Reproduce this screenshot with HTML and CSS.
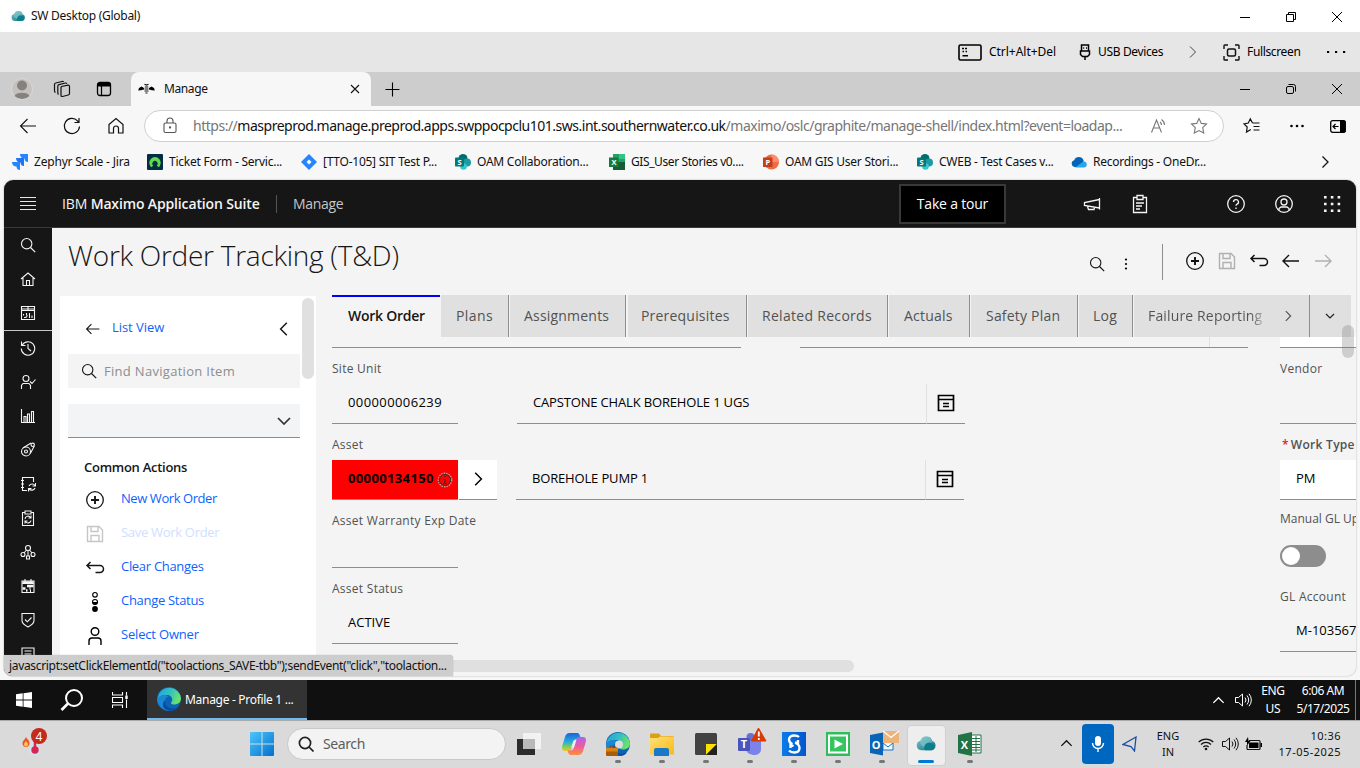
FILE: index.html
```
<!DOCTYPE html>
<html lang="en">
<head>
<meta charset="utf-8">
<title>SW Desktop (Global)</title>
<link rel="stylesheet" href="styles.css">
</head>
<body>
<svg class="defs" width="0" height="0">
  <defs>
    <linearGradient id="teal" x1="0" y1="0" x2="1" y2="1"><stop offset="0" stop-color="#7cc9cc"/><stop offset="1" stop-color="#0c6f80"/></linearGradient>
    <linearGradient id="edgeA" x1="0" y1="0" x2="1" y2="0.3"><stop offset="0" stop-color="#1f9fe0"/><stop offset=".6" stop-color="#35c1c0"/><stop offset="1" stop-color="#6be06a"/></linearGradient>
    <linearGradient id="winblue" x1="0" y1="0" x2="1" y2="1"><stop offset="0" stop-color="#4cc6fb"/><stop offset="1" stop-color="#0070d0"/></linearGradient>
    <linearGradient id="copA" x1="0" y1="0" x2="0" y2="1"><stop offset="0" stop-color="#1b60e0"/><stop offset=".5" stop-color="#25b0d8"/><stop offset=".8" stop-color="#8fd14a"/><stop offset="1" stop-color="#f6c324"/></linearGradient>
    <linearGradient id="copB" x1="0" y1="0" x2="0" y2="1"><stop offset="0" stop-color="#a965ee"/><stop offset=".5" stop-color="#ee5aa0"/><stop offset="1" stop-color="#fb8f3c"/></linearGradient>
    <linearGradient id="fold" x1="0" y1="0" x2="1" y2="1"><stop offset="0" stop-color="#ffe07a"/><stop offset="1" stop-color="#fdb813"/></linearGradient>
    <linearGradient id="snag" x1="0" y1="0" x2="1" y2="0"><stop offset="0" stop-color="#0a7be8"/><stop offset="1" stop-color="#0057d0"/></linearGradient>
  </defs>
  <symbol id="cloud" viewBox="0 0 20 16"><path d="M5 14.500a4.600 4.600 0 0 1-.6-9.100A5.800 5.800 0 0 1 15.500 5.500a4.700 4.700 0 0 1-.5 9z" fill="url(#teal)"/><circle cx="9.500" cy="6.500" r="5.500" fill="#8ccfd2" opacity=".55"/><path d="M8.500 14.500a5 5 0 0 1 6.800-6.800 3.600 3.600 0 0 1-.3 6.800z" fill="#0d7d8c"/></symbol>
  <symbol id="min" viewBox="0 0 12 12"><path d="M1 6.500h10" stroke="currentColor" fill="none"/></symbol>
  <symbol id="restore" viewBox="0 0 12 12"><path d="M1.500 3.500h7v7h-7zM3.500 3.500v-2h7v7h-2" stroke="currentColor" fill="none"/></symbol>
  <symbol id="close" viewBox="0 0 12 12"><path d="M1 1l10 10M11 1L1 11" stroke="currentColor" fill="none"/></symbol>
  <symbol id="chev" viewBox="0 0 16 16"><path d="M5.500 2.500L11 8l-5.500 5.500" stroke="currentColor" fill="none" stroke-width="1.300"/></symbol>
  <symbol id="chevup" viewBox="0 0 16 16"><path d="M2.500 10.500L8 5l5.500 5.500" stroke="currentColor" fill="none" stroke-width="1.400"/></symbol>
  <symbol id="mag" viewBox="0 0 16 16"><circle cx="6.700" cy="6.700" r="5.200" stroke="currentColor" fill="none" stroke-width="1.100"/><path d="M10.500 10.500l4.700 4.700" stroke="currentColor" stroke-width="1.200"/></symbol>
  <symbol id="plus" viewBox="0 0 20 20"><circle cx="10" cy="10" r="8.300" stroke="currentColor" fill="none" stroke-width="1.300"/><path d="M10 6v8M6 10h8" stroke="currentColor" stroke-width="1.900"/></symbol>
  <symbol id="save" viewBox="0 0 20 20"><path d="M2.500 2.500h11.500l3.500 3.500v11.500h-15zM6 2.500v5h7v-5M6 17.500v-6h8v6" stroke="currentColor" fill="none" stroke-width="1.400"/></symbol>
  <symbol id="undo" viewBox="0 0 20 20"><path d="M5.500 4L2 7.500 5.500 11M2 7.500h13a3.500 3.500 0 0 1 0 7H10.500" stroke="currentColor" fill="none" stroke-width="1.500"/></symbol>
  <symbol id="left" viewBox="0 0 20 20"><path d="M8 4L2 10l6 6M2 10h16" stroke="currentColor" fill="none" stroke-width="1.400"/></symbol>
  <symbol id="detail" viewBox="0 0 20 20"><path d="M2.500 2.500h15v15h-15zM2.500 6.500h15" stroke="#000" fill="none" stroke-width="1.700"/><path d="M7 10.500h6M7 13.500h6" stroke="#000" stroke-width="1.300"/></symbol>
  <symbol id="sp" viewBox="0 0 16 16"><circle cx="8" cy="4.500" r="4.500" fill="#036c70"/><circle cx="12" cy="8.500" r="4" fill="#1a9ba1"/><circle cx="8.500" cy="12.500" r="3.300" fill="#37c6d0"/><rect y="3.500" width="9" height="9" rx=".8" fill="#03787c"/><text x="4.500" y="10.800" class="badge-letter">S</text></symbol>
  <symbol id="speaker" viewBox="0 0 18 16"><path d="M1.500 5.500h3l4-3.500v12l-4-3.500h-3zM11 5.500a4 4 0 0 1 0 5M13 3.500a7 7 0 0 1 0 9M15 1.800a9.500 9.500 0 0 1 0 12.400" stroke="currentColor" fill="none"/></symbol>
  <symbol id="edge" viewBox="0 0 24 24"><circle cx="12" cy="12" r="12" fill="#0b63b4"/><path d="M1 9.500A11.700 11.700 0 0 1 24 11.500c0 4.500-4 6-7.500 6-2.500 0-3-1.500-2-2.500 2.200-3.200-.5-7-4.500-7C5.500 8 2 9 0 13.500z" fill="url(#edgeA)"/><path d="M0 13C2 8 8 6.500 11.500 9.500c-4 1.200-5 6-2.500 9.500s6.500 4.500 10 3C11 27 1 21.500 0 13z" fill="#1a87d7"/><path d="M8 13.500c-.5 7 7 10 13 7-3 5-11 3.500-13.500 1C5 18.500 6 15 8 13.500z" fill="#0a4a9e"/></symbol>
</svg>

<header class="titlebar">
  <svg class="cloud-sm"><use href="#cloud"/></svg>
  <span class="ui t-title">SW Desktop (Global)</span>
  <div class="winbtns">
    <span><svg width="12" height="12"><use href="#min"/></svg></span><span><svg width="12" height="12"><use href="#restore"/></svg></span><span><svg width="12" height="12"><use href="#close"/></svg></span>
  </div>
</header>

<div class="toolbar ui">
  <svg width="24" height="17" viewBox="0 0 24 17"><rect x="1" y="1" width="22" height="15" rx="1.500" fill="none" stroke="#000" stroke-width="1.600"/><path d="M4 4.500h2M7 4.500h2M4.500 7.500h1.500M7.500 7.500h1.500M4.500 11.800h5.500" stroke="#000" stroke-width="1.500"/></svg>
  <span class="t-cad">Ctrl+Alt+Del</span>
  <svg width="12" height="17" viewBox="0 0 12 17"><path d="M2.500 7V1h7v6M1.500 7h9v3.500L8.500 12.500h-5L1.500 10.500zM6 13v3" fill="none" stroke="#000" stroke-width="1.500"/><path d="M4.200 4h1M7 4h1" stroke="#000" stroke-width="1.400"/></svg>
  <span class="t-usb">USB Devices</span>
  <svg width="16" height="16" viewBox="0 0 16 16"><path d="M5 2.500L10.500 8 5 13.500" fill="none" stroke="#444"/></svg>
  <svg width="17" height="17" viewBox="0 0 17 17"><path d="M1 5V1.800q0-.8.8-.8H5M12 1h3.200q.8 0 .8.800V5M16 12v3.200q0 .8-.8.800H12M5 16H1.800q-.8 0-.8-.8V12" fill="none" stroke="#111" stroke-width="1.400"/><rect x="4.500" y="5" width="8" height="7" rx="1.500" fill="none" stroke="#111" stroke-width="1.500"/></svg>
  <span class="t-full">Fullscreen</span>
  <svg width="20" height="4" viewBox="0 0 20 4"><path d="M0 2h2.200M8 2h2.200M16 2h2.200" stroke="#000" stroke-width="2.200"/></svg>
</div>

<div class="tabstrip ui">
  <svg class="avatar" width="22" height="22" viewBox="0 0 22 22"><circle cx="11" cy="11" r="10.500" fill="#c4c1be" stroke="#d9d9d9"/><circle cx="11" cy="7.500" r="5" fill="#85817e"/><path d="M3.500 18a8 5 0 0 1 15 0 11 11 0 0 1-15 0z" fill="#85817e"/></svg>
  <svg width="18" height="18" viewBox="0 0 18 18" fill="none" stroke="#111" stroke-width="1.200"><path d="M8.500 6.500l6.500-1.300q1.500-.2 1.500 1.300v7q0 1.200-1.200 1.500L9.500 16.500Q8 16.700 8 15.200V7.500z"/><path d="M5.500 14.500Q4.800 14 4.800 13V6Q4.800 5 6 4.600l6.500-1.600q1-.1 1.300.7M2.500 12.500Q1.500 12 1.500 11V4.500Q1.500 3.300 2.700 3L9 1.500q1.200-.2 1.600.5"/></svg>
  <svg width="16" height="16" viewBox="0 0 16 16"><rect x="1.500" y="1.500" width="13" height="13" rx="2.500" fill="none" stroke="#000" stroke-width="1.300"/><path d="M1.500 2h13v3.500h-13z"/><path d="M5.500 5v9" stroke="#000" stroke-width="1.200"/></svg>
  <div class="tab">
    <svg width="17" height="12" viewBox="0 0 17 12"><path d="M6 5L3.500 3.500 1 5 .2 7.500 3 7.200l3-.7zM11 5l2.500-1.500L16 5l.8 2.500L14 7.200l-3-.7z"/><path d="M6.500 1.200L8.500 2l2-.8M6.800 4h3.500M6.500 6h4M6.500 8h4M7.500 10h2" stroke="#111" stroke-width="1.200" fill="none"/></svg>
    <span class="t-tab">Manage</span>
    <svg class="tab-x" width="10" height="10" viewBox="1 1 10 10"><path d="M2 2l8 8M10 2l-8 8" stroke="#111" stroke-width="1.100"/></svg>
  </div>
  <svg class="newtab" width="16" height="16" viewBox="0 0 16 16"><path d="M8.500 1.500v14M1.500 8.500h14" stroke="#000" stroke-width="1.100"/></svg>
  <div class="winbtns">
    <span><svg width="12" height="12"><use href="#min"/></svg></span><span><svg width="12" height="12" viewBox="0 0 12 12" fill="none" stroke="#000"><rect x="1.500" y="3.500" width="7" height="7" rx="1.500"/><path d="M3.500 1.500h5a2 2 0 0 1 2 2v5"/></svg></span><span><svg width="12" height="12"><use href="#close"/></svg></span>
  </div>
</div>

<div class="address ui">
  <svg width="20" height="20" viewBox="0 0 20 20" fill="none" stroke="#111" stroke-width="1.100"><path d="M9.500 3L2.500 10l7 7M2.500 10H18"/></svg>
  <svg width="20" height="20" viewBox="0 0 20 20" fill="none" stroke="#111" stroke-width="1.200"><path d="M17.500 10.500A7.600 7.600 0 1 1 15.500 4.800L17 6.500M17 2v4.500h-4.500"/></svg>
  <svg width="20" height="20" viewBox="0 0 20 20" fill="none" stroke="#111" stroke-width="1.200"><path d="M3 8.500L10 2.500l7 6v8.500h-4.500v-4.500a2.500 2.500 0 0 0-5 0V17H3z"/></svg>
  <div class="pill">
    <svg width="16" height="18" viewBox="0 0 16 18" fill="none" stroke="#555" stroke-width="1.100"><rect x="2" y="6" width="12" height="9.500" rx="1.500"/><path d="M5 6V4a3 3 0 0 1 6 0v2"/><circle cx="8" cy="10.500" r=".6" fill="#555"/></svg>
    <span class="url">https://<b>maspreprod.manage.preprod.apps.swppocpclu101.sws.int.southernwater.co.uk</b>/maximo/oslc/graphite/manage-shell/index.html?event=loadap...</span>
    <svg width="18" height="18" viewBox="0 0 18 18" fill="none" stroke="#777" stroke-width="1.100"><path d="M1.500 15.500L6.500 3l5 12.500M3.500 11h6M10 5a4 4 0 0 1 1.500 3M11.500 2.500a7 7 0 0 1 3 5.500"/></svg>
    <svg width="18" height="18" viewBox="0 0 18 18" fill="none" stroke="#777" stroke-width="1.100"><path d="M9 1.500l2.300 4.900 5.200.6-3.800 3.700 1 5.300L9 13.500 4.300 16l1-5.300L1.500 7l5.200-.6z"/></svg>
  </div>
  <svg width="18" height="18" viewBox="0 0 18 18" fill="none" stroke="#111" stroke-width="1.200"><path d="M9.500 6L7.300 1.800 5.300 6 1 6.800 4.200 10l-.7 5 4.300-2.500M9.500 6H16.500M10.500 9.500h6M10.500 13h6"/></svg>
  <svg width="16" height="4" viewBox="0 0 16 4"><circle cx="2.500" cy="2" r="1.300"/><circle cx="8" cy="2" r="1.300"/><circle cx="13.500" cy="2" r="1.300"/></svg>
  <svg width="16" height="13" viewBox="0 0 16 13"><rect x=".7" y=".7" width="14.600" height="11.600" rx="2" fill="none" stroke="#000" stroke-width="1.300"/><path d="M10 .5h4.500a1 1 0 0 1 1 1v10a1 1 0 0 1-1 1H10z"/><path d="M3 6.500h5.500M5.500 4L3 6.500 5.500 9" fill="none" stroke="#000" stroke-width="1.200"/></svg>
</div>

<nav class="bookmarks ui">
  <a class="bm first"><svg width="16" height="16" viewBox="0 0 16 16"><path d="M8 0h8v8c-2 0-3.500-1-3.500-3.500C10 4.500 8 3 8 0z" fill="#2684ff"/><path d="M4 4h8v8c-2 0-3.500-1-3.500-3.500C6 8.500 4 7 4 4z" fill="#1f74f0"/><path d="M0 8h8v8c-2 0-3.500-1-3.500-3.500C2 12.500 0 11 0 8z" fill="#2684ff"/></svg><span>Zephyr Scale - Jira</span></a>
  <a class="bm b2"><svg width="16" height="16" viewBox="0 0 16 16"><rect width="16" height="16" rx="1" fill="#032d42"/><path d="M4.500 13.300a5.700 5.700 0 1 1 7 0L9.800 11.500a2.600 2.600 0 1 0-3.600 0z" fill="#62d84e"/></svg><span>Ticket Form - Servic...</span></a>
  <a class="bm b3"><svg width="16" height="16" viewBox="0 0 16 16"><path d="M8 0l8 8-8 8-8-8z" fill="#2684ff"/><path d="M8 5.500L10.500 8 8 10.500 5.500 8z" fill="#fff"/></svg><span>[TTO-105] SIT Test P...</span></a>
  <a class="bm b4"><svg width="16" height="16"><use href="#sp"/></svg><span>OAM Collaboration...</span></a>
  <a class="bm b5"><svg width="16" height="16" viewBox="0 0 16 16"><rect x="4" width="12" height="16" fill="#21a366"/><path d="M4 8h12v8H4z" fill="#185c37"/><path d="M10 0h6v5h-6z" fill="#33c481"/><rect y="3.500" width="9.500" height="9.500" fill="#107c41"/><text x="4.700" y="11.300" class="badge-letter">X</text></svg><span>GIS_User Stories v0....</span></a>
  <a class="bm b6"><svg width="16" height="16" viewBox="0 0 16 16"><circle cx="8.500" cy="8" r="7.500" fill="#ed6c47"/><path d="M8.500.5A7.500 7.500 0 0 1 16 8H8.500z" fill="#ff8f6b"/><rect y="3.500" width="9.500" height="9.500" fill="#c43e1c"/><text x="4.700" y="11.300" class="badge-letter">P</text></svg><span>OAM GIS User Stori...</span></a>
  <a class="bm b7"><svg width="16" height="16"><use href="#sp"/></svg><span>CWEB - Test Cases v...</span></a>
  <a class="bm b8"><svg width="16" height="16" viewBox="0 0 16 16"><path d="M3.500 13a3.500 3.500 0 0 1-.3-6.800 5 5 0 0 1 9.300 0L13 13z" fill="#0364b8"/><path d="M4 13.500l8.500-6a3 3 0 0 1 .5 6z" fill="#28a8ea"/></svg><span>Recordings - OneDr...</span></a>
  <svg class="bm-more" width="16" height="16"><use href="#chev"/></svg>
</nav>

<div class="frame">
<div class="app">
  <header class="apphead">
    <svg class="menu" width="16" height="13" viewBox="0 0 16 13"><path d="M0 .5h16M0 4.500h16M0 8.500h16M0 12.500h16" stroke="#e8e8e8" stroke-width="1.200"/></svg>
    <span class="brand">IBM <b>Maximo Application Suite</b></span>
    <span class="brand-sub">Manage</span>
    <button class="tour">Take a tour</button>
    <div class="headicons">
      <svg width="18" height="18" viewBox="0 0 18 18" fill="none" stroke="#f4f4f4" stroke-width="1.300"><path d="M16.500 3v11.500M16.500 4.500L1.500 7.500v3L16.500 13M4.500 11.500l1 3h5.500l.5-2"/></svg>
      <svg width="20" height="20" viewBox="0 0 20 20" fill="none" stroke="#f4f4f4" stroke-width="1.300"><path d="M7 3.500H3.500v15h13v-15H13M7 1.500h6v4H7zM6 9h8M6 12h6M6 15h4"/></svg>
      <svg class="gap" width="20" height="20" viewBox="0 0 20 20" fill="none" stroke="#f4f4f4" stroke-width="1.300"><circle cx="10" cy="10" r="8.300"/><path d="M7.500 8a2.500 2.300 0 1 1 3.500 2.100c-.8.400-1 .8-1 1.600M10 13.500v1.400"/></svg>
      <svg width="20" height="20" viewBox="0 0 20 20" fill="none" stroke="#f4f4f4" stroke-width="1.300"><circle cx="10" cy="10" r="8.300"/><circle cx="10" cy="8" r="3"/><path d="M5 16.500v-2l2-1.500h6l2 1.500v2"/></svg>
      <svg width="20" height="20" viewBox="0 0 20 20" stroke="#f4f4f4" stroke-width="2.600" stroke-dasharray="2.600 4.200"><path d="M2 3.300h16.200M2 10h16.200M2 16.700h16.200"/></svg>
    </div>
  </header>
  <div class="appbody">
    <aside class="rail">
      <svg viewBox="0 0 16 16"><use href="#mag"/></svg>
      <svg viewBox="0 0 16 16"><path d="M1 8l7-6 7 6M3 7v7.500h10V7M6.500 14.500V9.500h3v5"/></svg>
      <svg viewBox="0 0 16 16"><path d="M1.500 1.500h13v13h-13zM1.500 5.500h13M1.500 4h13M8 1.500v4M4 12.500h1a1.800 1.800 0 0 0 1.500-3V8M3.500 9v1.500M9.500 13v-5M12 13v-2.500"/></svg>
      <hr>
      <svg viewBox="0 0 16 16"><path d="M1.500 1.500v4h4M2 5.500A6.700 6.700 0 1 1 1.300 8.500M8 4v4.500l3 2.500"/></svg>
      <svg viewBox="0 0 16 16"><circle cx="6" cy="4.500" r="3"/><path d="M1.500 15v-3.500l1.500-2h6l1.500 2V15M10 7.500l2 2 3.500-4"/></svg>
      <svg viewBox="0 0 16 16"><path d="M1.500 1v13.500H15M4 14.500V8.500h2v6M7.500 14.500V6h2v8.500M11.500 14.500V3.500h2v11"/></svg>
      <svg viewBox="0 0 16 16"><circle cx="6" cy="9.500" r="4.500"/><circle cx="6" cy="9.500" r="1.500"/><path d="M3 6l8-5M10.300 11.500l4-7.500"/><circle cx="12.700" cy="2.800" r="1.700"/></svg>
      <svg viewBox="0 0 16 16"><path d="M13.500 6V1.500h-11v13H7M1 4.500h3M1 8h3M1 11.500h3M9 10a3.500 3.500 0 0 1 6-.5M15.500 7v3h-3M15 12a3.500 3.500 0 0 1-6 .8M8.500 15.500v-3h3"/></svg>
      <svg viewBox="0 0 16 16"><path d="M5 2.500H2.500v13h11v-13H11M5 1h6v3H5zM5 9a3 3 0 0 1 5.500-1.500M11 5.500v2.500H8.500M11 10.500a3 3 0 0 1-5.500 1M5 13.500v-2.500h2.500"/></svg>
      <svg viewBox="0 0 16 16"><circle cx="8" cy="4" r="2.500"/><circle cx="3" cy="10.500" r="2"/><circle cx="13" cy="10.500" r="2"/><path d="M6.500 12h3v3h-3zM8 6.500V12M6.500 6L4 9M9.500 6L12 9"/></svg>
      <svg viewBox="0 0 16 16"><path d="M2 3h12v11.500H2zM2 5.500h12M5 1v3M11 1v3"/><path d="M2.500 4.500h11M7 8h6.500M2.500 10.500h3M9.500 10.500h1M6 12.500h1.500M10 13h1" stroke-width="2.400"/></svg>
      <svg viewBox="0 0 16 16"><path d="M2 1.500h12v7c0 3.500-3 5-6 6.500-3-1.500-6-3-6-6.500zM5 7.500l2.300 2.300L11.500 5.500"/></svg>
      <svg viewBox="0 0 16 16"><path d="M2 15V2h12v13M4.500 5h7M4.500 8h7M4.500 11h5"/></svg>
    </aside>
    <main class="main">
      <div class="pagehead">
        <h1>Work Order Tracking (T&amp;D)</h1>
        <div class="quick"><svg width="16" height="16"><use href="#mag"/></svg><svg width="16" height="16" viewBox="0 0 16 16"><circle cx="8" cy="3.500" r="1.100"/><circle cx="8" cy="8" r="1.100"/><circle cx="8" cy="12.500" r="1.100"/></svg></div>
        <div class="tools">
          <svg><use href="#plus"/></svg><svg class="off"><use href="#save"/></svg><svg><use href="#undo"/></svg><svg><use href="#left"/></svg><svg class="off flip"><use href="#left"/></svg>
        </div>
      </div>
      <div class="columns">
        <section class="panel">
          <div class="listview"><svg width="16" height="16"><use href="#left"/></svg><a class="t-list">List View</a><svg class="flip" width="18" height="18" viewBox="0 0 16 16"><use href="#chev" width="16" height="16"/></svg></div>
          <div class="find"><svg width="16" height="16"><use href="#mag"/></svg><span class="t-find">Find Navigation Item</span></div>
          <div class="select"><svg width="14" height="8" viewBox="0 0 14 8"><path d="M1 1l6 6 6-6" stroke="#333" fill="none" stroke-width="1.700"/></svg></div>
          <h2 class="t-common">Common Actions</h2>
          <ul>
            <li><svg><use href="#plus"/></svg><a class="t-a1">New Work Order</a></li>
            <li class="dim"><svg><use href="#save"/></svg><a class="t-a2">Save Work Order</a></li>
            <li><svg><use href="#undo"/></svg><a class="t-a3">Clear Changes</a></li>
            <li><svg viewBox="0 0 20 20"><circle cx="10" cy="2.800" r="2.300" fill="none" stroke="#000" stroke-width="1.100"/><circle cx="10" cy="10" r="2.500" fill="none" stroke="#000" stroke-width="1.100"/><path d="M7.500 10h5a2.500 2.500 0 0 1-5 0z"/><circle cx="10" cy="17" r="2.900"/></svg><a class="t-a4">Change Status</a></li>
            <li><svg viewBox="0 0 20 20" fill="none" stroke="#000" stroke-width="1.400"><circle cx="10" cy="5.500" r="3.800"/><path d="M4 19v-4a3 3 0 0 1 3-3h6a3 3 0 0 1 3 3v4"/></svg><a class="t-a5">Select Owner</a></li>
          </ul>
          <i class="vbar"></i>
        </section>
        <section class="work">
          <div class="tabs">
            <a class="on">Work Order</a><a class="w2">Plans</a><a class="w3">Assignments</a><a class="w4">Prerequisites</a><a class="w5">Related Records</a><a class="w6">Actuals</a><a class="w7">Safety Plan</a><a class="w8">Log</a><a class="w9"><span>Failure Reporting</span><svg width="14" height="14"><use href="#chev"/></svg></a><a class="w10"><svg width="12" height="12" viewBox="0 0 12 12"><path d="M2 4l4 4 4-4" stroke="#222" stroke-width="1.200" fill="none"/></svg></a>
          </div>
          <div class="form">
            <div class="left">
              <div class="stub"><i class="s1"></i><i class="s2"></i></div>
              <label>Site Unit</label>
              <div class="pair"><span class="val narrow t-num">000000006239</span><span class="val wide indent">CAPSTONE CHALK BOREHOLE 1 UGS</span><span class="val det"><svg><use href="#detail"/></svg></span></div>
              <label>Asset</label>
              <div class="pair"><span class="val narrow red">00000134150<svg width="16" height="16" viewBox="0 0 16 16" fill="none" stroke="#333"><circle cx="8" cy="8" r="6.700" stroke="#c99" stroke-width="1.400" stroke-dasharray="1.500 1"/><circle cx="8" cy="8" r="5.600"/><path d="M6.500 7.500H8v4M6 11.500h4M7.500 4.500h1.300" stroke-width="1.200"/></svg></span><span class="go"><svg width="18" height="18" viewBox="0 0 16 16"><use href="#chev" width="16" height="16"/></svg></span><span class="val wide">BOREHOLE PUMP 1</span><span class="val det"><svg><use href="#detail"/></svg></span></div>
              <label class="short">Asset Warranty Exp Date</label>
              <div class="pair"><span class="val narrow"></span></div>
              <label>Asset Status</label>
              <div class="pair"><span class="val narrow">ACTIVE</span></div>
            </div>
            <div class="right">
              <div class="stub2"></div>
              <label>Vendor</label>
              <span class="val"></span>
              <label class="req"><em>*</em>Work Type</label>
              <span class="val white">PM</span>
              <label class="man">Manual GL Up</label>
              <span class="toggle"><i></i></span>
              <label class="gl">GL Account</label>
              <span class="val">M-103567</span>
            </div>
          </div>
        </section>
      </div>
      <i class="vscroll"></i>
      <i class="hscroll"></i>
    </main>
  </div>
</div>
<div class="status ui"><span>javascript:setClickElementId("toolactions_SAVE-tbb");sendEvent("click","toolaction...</span></div>
</div>

<div class="taskbar10 ui">
  <svg width="16" height="16" viewBox="0 0 16 16" fill="#fff"><path d="M0 2.300L6.700 1.300V7.600H0zM7.500 1.200L16 0v7.600H7.500zM0 8.400h6.700v6.300L0 13.700zM7.500 8.400H16V16L7.500 14.800z"/></svg>
  <svg class="big" width="24" height="24" viewBox="0 0 24 24" fill="none" stroke="#fff" stroke-width="2"><circle cx="14" cy="10" r="8"/><path d="M8 15.500L1.500 22" stroke-width="2.600"/></svg>
  <svg width="17" height="16" viewBox="0 0 17 16" fill="none" stroke="#fff" stroke-width="1.100"><path d="M.5 0v3h10V0M.5 5.500h10v5H.5zM.5 16v-3h10v3M14.500 0v3.500M14.500 7.500V16"/><path d="M14.500 3.500v3.500" stroke-width="2.400"/></svg>
  <div class="running"><svg width="24" height="24"><use href="#edge"/></svg><span class="t-run">Manage - Profile 1 ...</span></div>
  <div class="tray10"><svg width="15" height="15"><use href="#chevup"/></svg><svg width="18" height="16"><use href="#speaker"/></svg><span class="lang">ENG<br>US</span><span class="clock">6:06 AM<br>5/17/2025</span><i></i></div>
</div>

<div class="taskbar11 ui">
  <svg class="weather" width="28" height="30" viewBox="0 0 28 30"><path d="M6 9c1 2 3.500 3.500 3.500 6S8 19 6 19s-3.500-1.500-3.500-4S5 12 6 9z" fill="#e8562b"/><path d="M6 13c1 1.500 2 2 2 3.500a2 2 0 0 1-4 0C4 15 5 14.500 6 13z" fill="#ffc24a"/><path d="M12 8h6v10a5.500 5.500 0 1 1-7 0z" fill="#cfe3f5"/><circle cx="15" cy="22" r="3.700" fill="#d8264e"/><path d="M15 10v12" stroke="#d8264e" stroke-width="2.500"/><circle cx="19" cy="8" r="8" fill="#c42b1c"/><text x="19" y="12.500" class="count">4</text></svg>
  <svg class="start" width="24" height="24" viewBox="0 0 24 24" fill="url(#winblue)"><path d="M0 1a1 1 0 0 1 1-1h10.500v11.500H0zM12.500 0H23a1 1 0 0 1 1 1v10.500H12.500zM0 12.500h11.500V24H1a1 1 0 0 1-1-1zM12.500 12.500H24V23a1 1 0 0 1-1 1H12.500z"/></svg>
  <div class="search"><svg width="16" height="16" viewBox="0 0 16 16" fill="none" stroke="#222" stroke-width="1.700"><circle cx="7" cy="7" r="5.600"/><path d="M11 11l4.500 4.500"/></svg><span class="t-search">Search</span></div>
  <div class="apps">
    <span><svg viewBox="0 0 24 24"><path d="M6 1h18v16H6z" fill="#f2f2f2"/><path d="M0 7h18v16H0z" fill="#2c2c2c"/><path d="M6 7h12v10H6z" fill="#b9b9b9"/></svg></span>
    <span><svg viewBox="0 0 24 24"><path d="M8 1h7c2 0 2.500 1.500 3 3l1 3h-4c-2 0-3 1-3.500 3L9.500 17c-.6 1.500-1.500 2-3 2H3c-3 0-3.500-2.500-2.500-6L3 5c.8-2.500 2-4 5-4z" fill="url(#copA)"/><path d="M16 23H9c-2 0-2.500-1.500-3-3l-.5-1.500H8c2.500 0 3.500-1 4-3L14.500 7c.6-1.500 1.500-2 3-2H21c3 0 3.500 2.500 2.500 6L21 19c-.8 2.500-2 4-5 4z" fill="url(#copB)"/><path d="M11.500 8.500h2.700l-2.300 7H9.200z" fill="#eee"/></svg></span>
    <span class="dot"><svg viewBox="0 0 24 24"><use href="#edge" width="24" height="24"/><circle cx="13" cy="12.500" r="4" fill="#dcdcdc"/><rect y="15.500" width="12" height="8.500" rx="1" fill="#a95c08"/><path d="M0 16h12v3.500H0z" fill="#d98218"/><path d="M4 15.500v-1.500h4v1.500" fill="none" stroke="#8a4600"/></svg></span>
    <span class="dot"><svg viewBox="0 0 24 24"><path d="M0 2.500a1 1 0 0 1 1-1h8l2 2.500h12a1 1 0 0 1 1 1V12H0z" fill="#dca017"/><path d="M0 6h8l2-1.500h14V22.500H0z" fill="url(#fold)"/><path d="M4 24v-6a2 2 0 0 1 2-2h11a2 2 0 0 1 2 2v6z" fill="#1978c8"/></svg></span>
    <span class="dot"><svg viewBox="0 0 24 24"><rect x="1" y="1" width="22" height="22" rx="1.500" fill="#424242"/><path d="M12 23V12h11z" fill="#ffe100"/><path d="M12 23h11V12z" fill="#222"/></svg></span>
    <span class="dot"><svg class="over" viewBox="0 0 24 24"><circle cx="12.500" cy="5" r="4" fill="#6870d8"/><path d="M7 9h16v7a6 6 0 0 1-6 7c-5 0-9-2-9-7z" fill="#7b83eb"/><rect y="6" width="12" height="13" rx="1" fill="#4b53bc"/><text x="6" y="16" class="ticon">T</text><path d="M20.500-4L28 9H13.500z" fill="#d83b01" stroke="#d83b01" stroke-linejoin="round"/><path d="M20.800-.5v5M20.800 6v2" stroke="#fff" stroke-width="1.800"/></svg></span>
    <span class="dot"><svg viewBox="0 0 24 24"><path d="M0 0h24v24H0z" fill="url(#snag)"/><path d="M17 5c-1-1-3-1.500-5-1.500-3 0-5 1.800-5 4.200 0 2 1 3.300 3.500 4.300M13.500 11c2.500 1 4 2.500 4 5 0 2.800-2 4.500-5 4.500-2.500 0-4.500-.8-5.500-2M16 8v3.500l-3-1M8.500 16v-3l3 1.200" fill="none" stroke="#fff" stroke-width="2.400"/></svg></span>
    <span class="dot"><svg viewBox="0 0 24 24"><path d="M0 0h24v24H0z" fill="#2fbd59"/><path d="M3 3.500h18v17H3z" fill="#34c560" stroke="#fff" stroke-width="2"/><path d="M8.500 7.500L17 12l-8.500 4.500z" fill="#fff"/></svg></span>
    <span class="dot"><svg class="over" viewBox="0 0 24 24"><path d="M13 8h10v10H13z" fill="#f3f8fc" stroke="#1b73be"/><path d="M13 11l5 4 5-4" fill="none" stroke="#1b73be"/><path d="M0 3L13 .5V23.500L0 21z" fill="#0a64b5"/><text x="6.200" y="16.500" class="ticon">O</text><path d="M13-1h16v12H13z" fill="#ecb37a"/><path d="M13-1l8 6.500L29-1" fill="none" stroke="#fff" stroke-width="1.200"/></svg></span>
    <span class="dot active"><svg viewBox="0 0 20 16"><use href="#cloud" width="20" height="16"/></svg></span>
    <span class="dot"><svg viewBox="0 0 24 24"><path d="M12 3h11v18H12z" fill="#fff" stroke="#217346"/><path d="M13 6.500h9M13 9.500h9M13 12.500h9M13 15.500h9M13 18h9M18 4v16" stroke="#217346"/><path d="M0 3L14 0v24L0 21z" fill="#217346"/><text x="6.500" y="16.500" class="ticon">X</text></svg></span>
  </div>
  <div class="tray11">
    <svg width="15" height="15"><use href="#chevup"/></svg>
    <span class="mic"><svg width="14" height="18" viewBox="0 0 14 18"><rect x="4" y="1" width="6" height="10" rx="3" fill="#fff"/><path d="M1.500 8a5.500 5.500 0 0 0 11 0M7 13.500V17" fill="none" stroke="#fff" stroke-width="1.400"/></svg></span>
    <svg width="16" height="16" viewBox="0 0 16 16" fill="none" stroke="#1c4fa3" stroke-width="1.300"><path d="M14 1L1 8.500l8 2L12.500 15z"/></svg>
    <span class="lang">ENG<br>IN</span>
    <svg width="16" height="14" viewBox="0 0 16 14" fill="none" stroke="#111" stroke-width="1.200"><path d="M.7 5a10.500 10.500 0 0 1 14.600 0M3 7.500a7 7 0 0 1 10 0M5.300 10a4 4 0 0 1 5.400 0"/><circle cx="8" cy="12" r="1.300" fill="#111" stroke="none"/></svg>
    <svg width="18" height="16"><use href="#speaker"/></svg>
    <svg width="17" height="14" viewBox="0 0 17 14"><path d="M4 3.500h10a1 1 0 0 1 1 1v7a1 1 0 0 1-1 1H3a1 1 0 0 1-1-1V8" fill="none" stroke="#111" stroke-width="1.200"/><path d="M4 5.500h9.500v5.500H4z"/><path d="M15.500 6h1.500v4h-1.500zM3 0L0 5h2v3.500L5.500 4H3.500z"/></svg>
    <span class="clock">10:36<br>17-05-2025</span>
  </div>
</div>
</body>
</html>
```
FILE: styles.css
```
* { box-sizing: border-box; }
body { margin: 0; width: 1360px; height: 768px; overflow: hidden; background: #f7f7f7; color: #161616; white-space: nowrap; font-family: "Open Sans", sans-serif; }
svg { display: block; flex: none; }
.defs { position: absolute; }
.ui { font-family: "Noto Sans", sans-serif; font-size: 12px; color: #111; }
i, em { font-style: normal; }
.flip { transform: scaleX(-1); }
.badge-letter { font: bold 7.500px "Open Sans", sans-serif; fill: #fff; text-anchor: middle; }

/* remote desktop window */
.titlebar { display: flex; align-items: center; height: 32px; padding-left: 11px; background: #fff; }
.cloud-sm { width: 15px; height: 12px; margin-right: 5px; }
.winbtns { display: flex; margin-left: auto; color: #000; }
.winbtns span { display: flex; justify-content: center; width: 46px; }
.titlebar .winbtns { padding-top: 2px; }
.t-title { letter-spacing: -.27px; padding-bottom: 1px; }
.toolbar { display: grid; grid-template-columns: 31px 90px 19px 87px 38px 24px 80px 20px; align-items: center; height: 40px; padding-left: 958px; background: #e6e6e6; color: #000; letter-spacing: -.35px; }
.toolbar span { padding-bottom: 1px; }
.toolbar .t-cad { letter-spacing: -.03px; }

/* browser chrome */
.tabstrip { display: flex; align-items: center; height: 34px; padding-left: 11px; background: #cdcdcd; }
.tabstrip > svg:nth-child(2) { margin-left: 20px; }
.tabstrip > svg:nth-child(3) { margin: 0 19px 0 25px; }
.tab { display: flex; align-items: center; width: 240px; height: 34px; padding: 0 11px 0 7px; border-radius: 8px 8px 0 0; background: #f7f7f7; }
.t-tab { margin-left: 9px; letter-spacing: -.4px; padding-bottom: 1px; }
.tab-x { margin-left: auto; }
.newtab { margin-left: 13px; }
.address { display: grid; grid-template-columns: 44px 44px 38px 1099px 46px 41px 16px; align-items: center; height: 40px; padding-left: 18px; }
.pill { display: grid; grid-template-columns: 31px 957px 40px 18px; align-items: center; width: 1080px; height: 32px; padding-left: 17px; border: 1px solid #d0d0d0; border-radius: 16px; background: #fff; }
.url { padding-bottom: 2px; font-size: 14px; color: #767676; letter-spacing: -.49px; }
.url b { font-weight: 400; color: #111; }
.bookmarks { display: flex; align-items: center; height: 34px; padding: 0 27px 3px 12px; }
.bm { display: flex; gap: 6px; align-items: center; width: 154px; letter-spacing: -.25px; }
.bm.first { width: 135px; letter-spacing: -.2px; }
.b5 { letter-spacing: -.4px; }
.bm-more { margin-left: auto; }

/* Maximo */
.frame { position: relative; height: 500px; padding: 0 4px 4px; }
.app { display: flex; flex-direction: column; height: 496px; border-radius: 9px; overflow: hidden; background: #f4f4f4; box-shadow: 0 0 2px #aaa; }
.apphead { display: flex; align-items: center; height: 48px; padding: 0 15px 0 16px; border-bottom: 1px solid #393939; background: #161616; color: #f4f4f4; font-size: 14px; }
.brand { margin-left: 26px; width: 215px; height: 18px; line-height: 18px; border-right: 1px solid #555; letter-spacing: -.14px; }
.brand b { font-weight: 600; }
.brand-sub { margin-left: 16px; color: #c6c6c6; letter-spacing: -.3px; }
.tour { width: 107px; height: 40px; margin-left: auto; padding: 0; border: 2px solid #393939; background: #000; color: #fff; font: 14px "Open Sans", sans-serif; letter-spacing: -.2px; }
.headicons { display: flex; align-items: center; width: 258px; margin-left: 77px; gap: 28px; }
.headicons svg:first-child { margin-right: 1px; }
.headicons .gap { margin-left: 48px; }
.appbody { display: flex; flex: 1; min-height: 0; }
.rail { width: 48px; background: #161616; overflow: hidden; color: #f4f4f4; }
.rail svg { width: 16px; height: 16px; margin: 9px 16px 18px; fill: none; stroke: #f4f4f4; stroke-width: 1.100; }
.rail hr { margin: -9px 0 0; border: 0; border-top: 1px solid #c6c6c6; height: 0; }
.rail hr + svg { margin-top: 9px; }
.main { position: relative; display: flex; flex-direction: column; width: 1304px; overflow: hidden; }
.pagehead { display: flex; height: 67px; padding-left: 16px; }
h1 { width: 1021px; margin: 7px 0 0; font-size: 28px; line-height: 40px; font-weight: 300; letter-spacing: -.26px; }
.quick { display: flex; gap: 13px; padding-top: 28px; width: 73px; }
.tools { display: flex; align-items: center; gap: 12px; height: 36px; margin-top: 16px; padding: 0 0 2px 22px; border-left: 1px solid #8d8d8d; color: #111; }
.tools svg { width: 20px; height: 20px; }
.tools .off { color: #b0b0b0; }
.columns { display: flex; flex: 1; min-height: 0; }
.panel { position: relative; width: 256px; margin: 1px 16px 0 8px; padding: 0 16px 0 8px; background: #fff; }
.vbar { position: absolute; right: 2px; top: 2px; width: 12px; height: 81px; border-radius: 6px; background: #e0e0e0; }
.panel a { color: #0f62fe; font-size: 13px; }
.listview { display: grid; grid-template-columns: 27px 163px 20px; align-items: center; height: 58px; padding: 8px 0 0 17px; }
.listview a { padding-bottom: 4px; letter-spacing: -.05px; }
.find { display: flex; align-items: center; gap: 7px; height: 34px; padding-left: 13px; background: #f4f4f4; color: #8d8d8d; font-size: 13px; letter-spacing: .3px; }
.find span { padding-bottom: 1px; }
.find svg { color: #161616; }
.select { display: flex; align-items: center; justify-content: flex-end; height: 34px; margin-top: 16px; padding-right: 9px; border-bottom: 1px solid #8d8d8d; background: #f3f4f6; }
h2 { margin: 20px 0 5px 16px; font-size: 13px; line-height: 18px; font-weight: 600; letter-spacing: -.27px; }
ul { margin: 0; padding: 0; list-style: none; }
li { display: flex; align-items: center; gap: 16px; height: 34px; padding-left: 17px; letter-spacing: -.3px; }
li svg { width: 20px; height: 20px; margin-top: 3px; overflow: visible; }
.t-a1 { letter-spacing: -.43px; }
.t-a5 { letter-spacing: -.18px; }
.dim svg { color: #c6c6c6; }
.panel .dim a { color: #d0e0ff; }

.work { width: 1024px; overflow: hidden; }
.tabs { display: flex; height: 42px; font-size: 14px; line-height: 42px; color: #525252; letter-spacing: .2px; }
.tabs a { padding-left: 14px; border-right: 1px solid #8d8d8d; margin-right: 2px; background: #e0e0e0; }
.tabs .on { width: 108px; padding-left: 16px; margin-right: 1px; border: 0; border-top: 2px solid #00f; background: none; color: #161616; font-weight: 600; line-height: 38px; letter-spacing: -.25px; }
.tabs .w2 { width: 68px; letter-spacing: .4px; margin-right: 1px; padding-left: 15px; }
.tabs .w3 { width: 116px; margin-right: 2px; }
.tabs .w4 { width: 119px; margin-right: 1px; padding-left: 13px; }
.tabs .w5 { width: 140px; margin-right: 1px; letter-spacing: .3px; }
.tabs .w6 { width: 81px; margin-right: 1px; padding-left: 15px; }
.tabs .w7 { width: 107px; margin-right: 1px; padding-left: 15px; }
.tabs .w8 { width: 54px; margin-right: 1px; }
.tabs .w9 { display: flex; align-items: center; justify-content: space-between; width: 176px; padding-right: 14px; margin: 0; letter-spacing: .15px; }
.w9 span { background: linear-gradient(90deg, #525252 90%, #aaa); background-clip: text; -webkit-background-clip: text; color: transparent; }
.tabs .w10 { display: flex; align-items: center; width: 41px; border: 0; margin: 0; }
.form { display: flex; font-size: 13px; }
.left { flex: none; width: 948px; }
.right { flex: none; width: 76px; }
.stub { display: flex; height: 11px; gap: 59px; }
.stub i { border-bottom: 1px solid #8d8d8d; }
.s1 { width: 409px; }
.s2 { width: 448px; background: linear-gradient(#e0e0e0, #e0e0e0) 409px 0 / 1px 10px no-repeat; }
.stub2 { height: 11px; border-bottom: 1px solid #8d8d8d; background: #fff; }
label { display: block; height: 36px; padding-top: 12px; color: #525252; font-size: 12px; line-height: 18px; letter-spacing: .27px; }
label.short { height: 28px; }
.pair { display: flex; height: 40px; color: #000; }
.val { display: block; height: 40px; line-height: 37px; border-bottom: 1px solid #8d8d8d; color: #000; }
.narrow { width: 126px; padding-left: 16px; }
.t-num { letter-spacing: .4px; }
.wide { width: 409px; margin-left: 19px; padding-left: 16px; letter-spacing: -.16px; }
.indent { margin-left: 59px; }
.det { display: flex; align-items: center; width: 39px; padding: 0 0 2px 9px; border-left: 1px solid #e0e0e0; }
.det svg { width: 20px; height: 20px; }
.red { display: flex; align-items: center; gap: 3px; background: #f00; font-weight: 700; letter-spacing: .37px; padding-bottom: 2px; }
.red svg { margin-top: 3px; }
.go { display: flex; align-items: center; width: 38px; margin-left: 1px; padding: 0 0 1px 10px; border-bottom: 1px solid #8d8d8d; background: #fff; }
.white { background: #fff; }
.right .val { padding-left: 16px; }
.req { font-weight: 600; letter-spacing: .28px; }
.req em { color: #da1e28; margin: 0 2px; }
.man { height: 45px; padding-top: 10px; letter-spacing: 0; }
.toggle { display: block; width: 46px; height: 22px; padding: 2px; border-radius: 11px; background: #8d8d8d; }
.toggle i { display: block; width: 18px; height: 18px; border-radius: 9px; background: #fff; }
.gl { height: 45px; padding-top: 21px; }
.vscroll { position: absolute; right: 2px; top: 97px; width: 12px; height: 33px; border-radius: 6px; background: rgba(120,120,120,.3); }
.hscroll { position: absolute; left: 280px; top: 432px; width: 522px; height: 12px; border-radius: 6px; background: #e0e0e0; }
.status { position: absolute; left: 4px; top: 475px; width: 449px; height: 21px; padding-left: 5px; border-radius: 0 4px 0 8px; background: #cdcdcd; line-height: 21px; box-shadow: 0 0 1px #888; letter-spacing: -.33px; }

/* remote taskbar */
.taskbar10 { display: flex; align-items: center; height: 40px; padding-left: 16px; background: #101010; color: #fff; }
.big { margin: 0 28px 0 28px; }
.running { display: flex; align-items: center; gap: 4px; width: 160px; height: 40px; margin-left: 18px; padding-left: 10px; border-bottom: 2px solid #76b9ed; background: #333; letter-spacing: -.3px; }
.tray10 { display: flex; align-items: center; height: 40px; margin-left: auto; }
.tray10 svg + svg { margin-left: 8px; }
.tray10 span { line-height: 18px; text-align: center; }
.tray10 .lang { width: 30px; margin-left: 6px; letter-spacing: -.3px; }
.tray10 .clock { width: 64px; margin-left: 3px; letter-spacing: -.45px; }
.tray10 i { width: 5px; height: 40px; border-left: 1px solid #777; }

/* local taskbar */
.taskbar11 { display: flex; align-items: center; height: 48px; padding: 0 0 2px 20px; border-top: 1px solid #aaa; background: #dadada; }
.weather { margin: -2px 202px 0 0; }
.count { font: 12px "Noto Sans", sans-serif; fill: #fff; text-anchor: middle; }
.search { display: flex; align-items: center; gap: 9px; width: 219px; height: 32px; margin-left: 13px; padding-left: 10px; border: 1px solid #c9c9c9; border-radius: 16px; background: #f3f3f3; font-size: 14px; color: #5d5d5d; letter-spacing: -.4px; }
.apps { display: flex; }
.apps span { position: relative; display: flex; align-items: center; justify-content: center; width: 44px; height: 45px; }
.apps span:first-child { width: 46px; }
.apps svg { width: 24px; height: 24px; }
.apps .over { overflow: visible; }
.dot::after { content: ""; position: absolute; left: 19px; bottom: 3px; width: 6px; height: 3px; border-radius: 2px; background: #777; }
.apps .active::before { content: ""; position: absolute; left: 3px; top: 4px; width: 37px; height: 39px; border: 1px solid #cfcfcf; border-radius: 4px; background: #eeeeee; }
.apps .active svg { position: relative; width: 21px; height: 17px; }
.apps .active::after { left: 14px; width: 16px; background: #0078d4; }
.ticon { font: bold 11px "Open Sans", sans-serif; fill: #fff; text-anchor: middle; }
.tray11 { display: flex; align-items: center; margin-left: auto; padding-right: 19px; }
.mic { display: flex; align-items: center; justify-content: center; width: 32px; height: 40px; margin: 0 8px; border-radius: 4px; background: #0067c0; }
.tray11 span.lang { width: 32px; margin: 0 14px; text-align: center; line-height: 16px; font-size: 11px; }
.tray11 .lang + svg + svg { margin: 0 6px 0 7px; }
.tray11 .clock { width: 79px; text-align: right; line-height: 16px; font-size: 11px; letter-spacing: .5px; }
```
